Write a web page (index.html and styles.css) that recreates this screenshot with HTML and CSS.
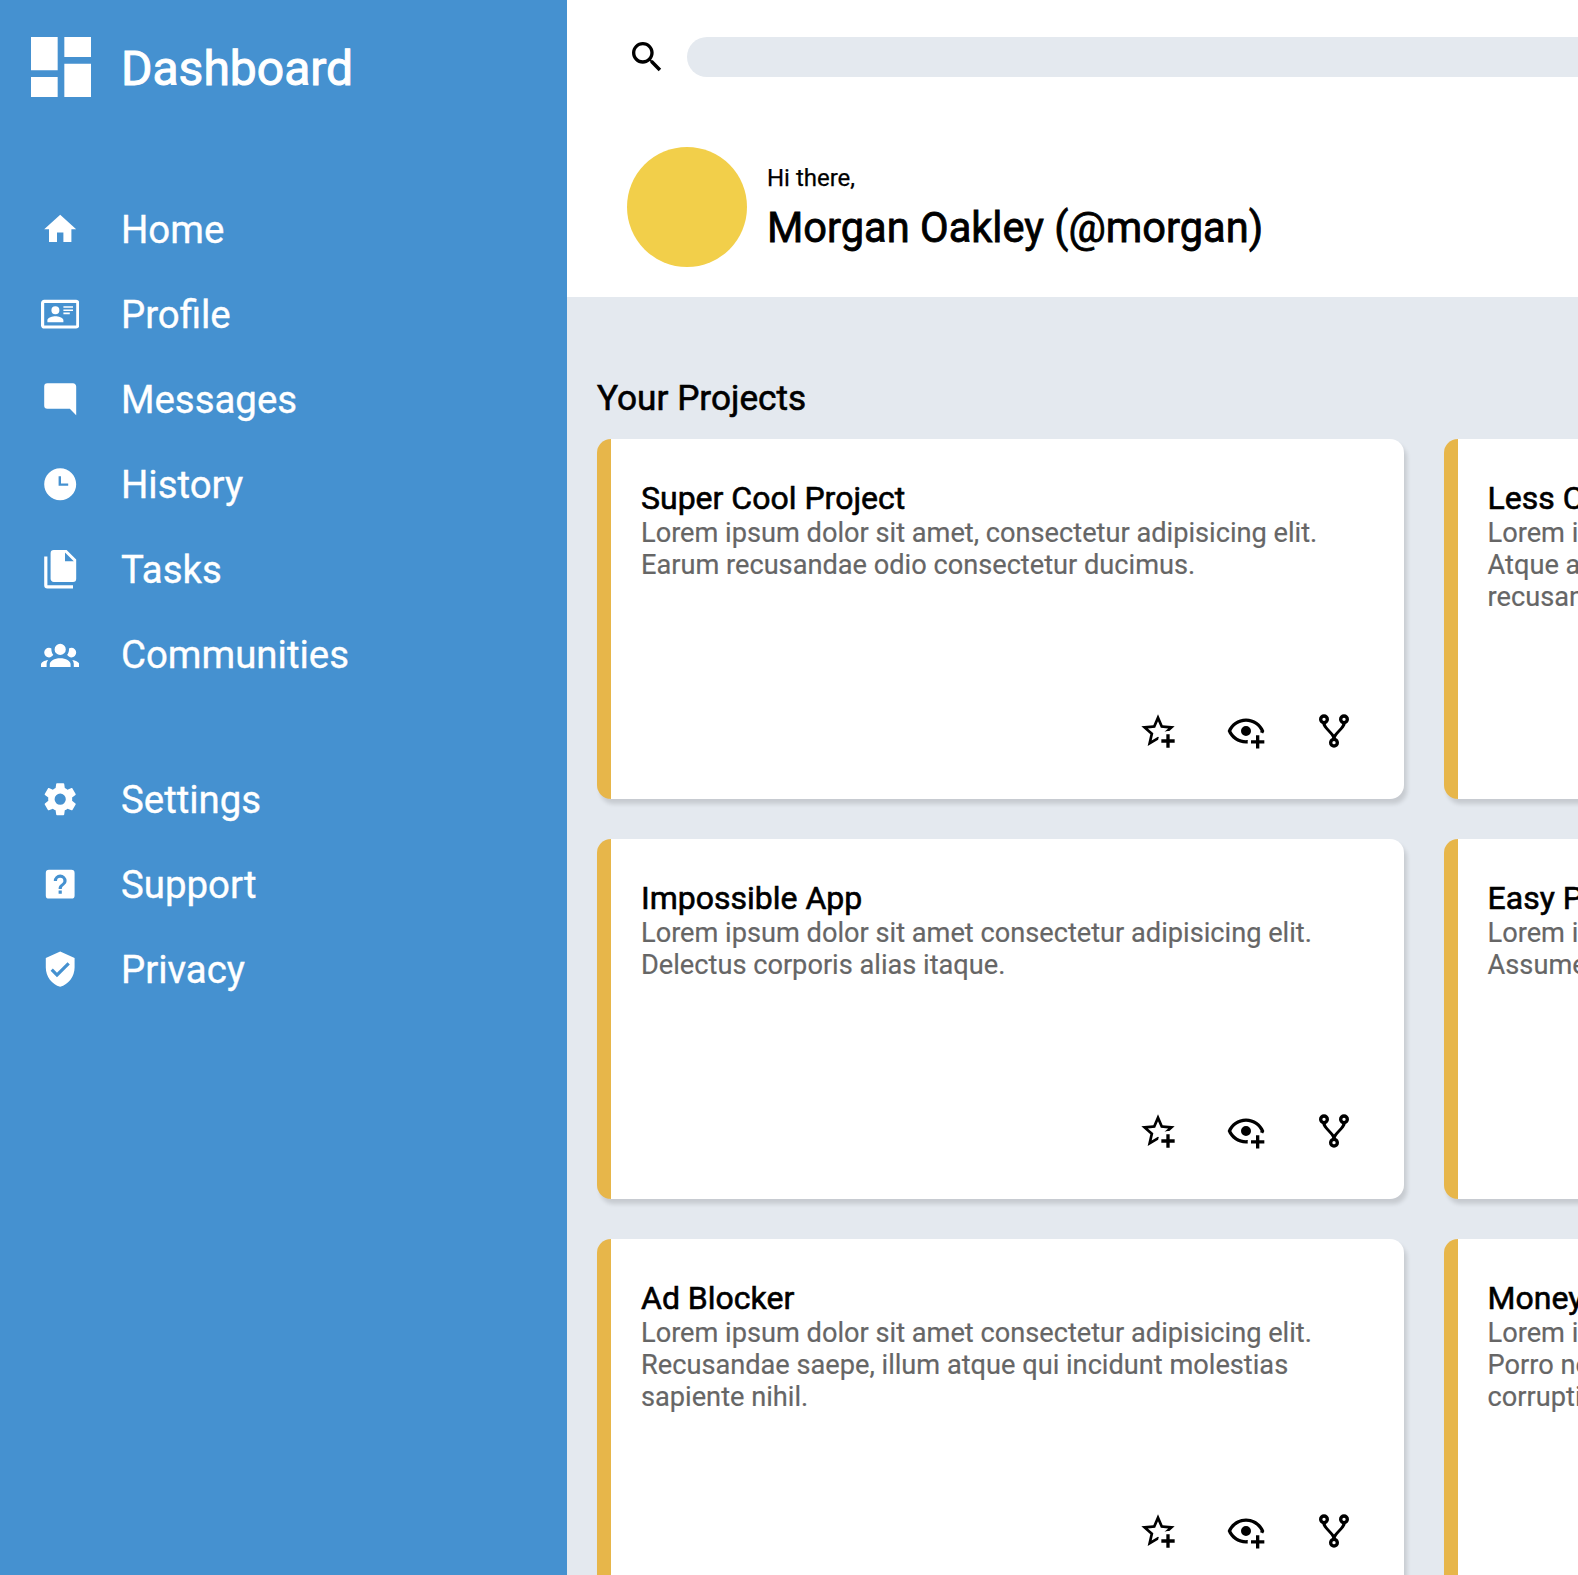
FILE: index.html
```html
<!DOCTYPE html>
<html lang="en">
<head>
<meta charset="utf-8">
<title>Dashboard</title>
<link rel="stylesheet" href="styles.css">
</head>
<body>
<svg class="sprite" aria-hidden="true">
  <symbol id="star" viewBox="0 0 24 24"><path d="M5.8 21 7.4 14 2 9.2 9.2 8.6 12 2 14.8 8.6 22 9.2 18.8 12H18C17.3 12 16.6 12.1 15.9 12.4L18.1 10.5 13.7 10.1 12 6.1 10.3 10.1 5.9 10.5 9.2 13.4 8.2 17.7 12 15.4 12.5 15.7C12.3 16.2 12.1 16.8 12.1 17.3L5.8 21M17 14V17H14V19H17V22H19V19H22V17H19V14H17Z"/></symbol>
  <symbol id="eye" viewBox="0 0 24 24"><path d="M12,4.5C7,4.5 2.73,7.61 1,12C2.73,16.39 7,19.5 12,19.5C12.36,19.5 12.72,19.5 13.08,19.45C13.03,19.13 13,18.82 13,18.5C13,18.14 13.04,17.78 13.1,17.42C12.74,17.46 12.37,17.5 12,17.5C8.24,17.5 4.83,15.36 3.18,12C4.83,8.64 8.24,6.5 12,6.5C15.76,6.5 19.17,8.64 20.82,12C20.7,12.24 20.56,12.45 20.43,12.68C21.09,12.84 21.72,13.11 22.29,13.5C22.56,13 22.8,12.5 23,12C21.27,7.61 17,4.5 12,4.5M12,9A3,3 0 0,0 9,12A3,3 0 0,0 12,15A3,3 0 0,0 15,12A3,3 0 0,0 12,9M18,14.5V17.5H15V19.5H18V22.5H20V19.5H23V17.5H20V14.5H18Z"/></symbol>
  <symbol id="fork" viewBox="0 0 24 24"><path d="M6,2A3,3 0 0,1 9,5C9,6.28 8.19,7.38 7.06,7.81C7.15,8.27 7.39,8.83 8,9.63C9,10.92 11,12.83 12,14.17C13,12.83 15,10.92 16,9.63C16.61,8.83 16.85,8.27 16.94,7.81C15.81,7.38 15,6.28 15,5A3,3 0 0,1 18,2A3,3 0 0,1 21,5C21,6.32 20.14,7.45 18.95,7.85C18.87,8.37 18.64,9 18,9.83C17,11.17 15,13.08 14,14.38C13.39,15.17 13.15,15.73 13.06,16.19C14.19,16.62 15,17.72 15,19A3,3 0 0,1 12,22A3,3 0 0,1 9,19C9,17.72 9.81,16.62 10.94,16.19C10.85,15.73 10.61,15.17 10,14.38C9,13.08 7,11.17 6,9.83C5.36,9 5.13,8.37 5.05,7.85C3.86,7.45 3,6.32 3,5A3,3 0 0,1 6,2M6,4A1,1 0 0,0 5,5A1,1 0 0,0 6,6A1,1 0 0,0 7,5A1,1 0 0,0 6,4M18,4A1,1 0 0,0 17,5A1,1 0 0,0 18,6A1,1 0 0,0 19,5A1,1 0 0,0 18,4M12,18A1,1 0 0,0 11,19A1,1 0 0,0 12,20A1,1 0 0,0 13,19A1,1 0 0,0 12,18Z"/></symbol>
</svg>
<div class="layout">
  <aside class="sidebar">
    <div class="brand">
      <svg viewBox="0 0 24 24"><path d="M13,3V9H21V3M13,21H21V11H13M3,21H11V15H3M3,13H11V3H3V13Z"/></svg>
      <h1>Dashboard</h1>
    </div>
    <nav>
      <ul class="menu">
        <li><svg viewBox="0 0 24 24"><path d="M10,20V14H14V20H19V12H22L12,3L2,12H5V20H10Z"/></svg><span>Home</span></li>
        <li><svg viewBox="0 0 24 24"><path d="M22,3H2C0.91,3.04 0.04,3.91 0,5V19C0.04,20.09 0.91,20.96 2,21H22C23.09,20.96 23.96,20.09 24,19V5C23.96,3.91 23.09,3.04 22,3M22,19H2V5H22V19M14,17V15.75C14,14.09 10.66,13.25 9,13.25C7.34,13.25 4,14.09 4,15.75V17H14M9,7A2.5,2.5 0 0,0 6.5,9.5A2.5,2.5 0 0,0 9,12A2.5,2.5 0 0,0 11.5,9.5A2.5,2.5 0 0,0 9,7M14,7V8H20V7H14M14,9V10H20V9H14M14,11V12H18V11H14"/></svg><span>Profile</span></li>
        <li><svg viewBox="0 0 24 24"><path d="M22,4C22,2.89 21.1,2 20,2H4A2,2 0 0,0 2,4V16A2,2 0 0,0 4,18H18L22,22V4Z"/></svg><span>Messages</span></li>
        <li><svg viewBox="0 0 24 24"><path d="M12 2C6.5 2 2 6.5 2 12C2 17.5 6.5 22 12 22C17.5 22 22 17.5 22 12S17.5 2 12 2M17 13H11V7H12.5V11.5H17V13Z"/></svg><span>History</span></li>
        <li><svg viewBox="0 0 24 24"><path d="M15,7H20.5L15,1.5V7M8,0H16L22,6V18A2,2 0 0,1 20,20H8C6.89,20 6,19.1 6,18V2A2,2 0 0,1 8,0M4,4V22H20V24H4A2,2 0 0,1 2,22V4H4Z"/></svg><span>Tasks</span></li>
        <li><svg viewBox="0 0 24 24"><path d="M12,5.5A3.5,3.5 0 0,1 15.5,9A3.5,3.5 0 0,1 12,12.5A3.5,3.5 0 0,1 8.5,9A3.5,3.5 0 0,1 12,5.5M5,8C5.56,8 6.08,8.15 6.53,8.42C6.38,9.85 6.8,11.27 7.66,12.38C7.16,13.34 6.16,14 5,14A3,3 0 0,1 2,11A3,3 0 0,1 5,8M19,8A3,3 0 0,1 22,11A3,3 0 0,1 19,14C17.84,14 16.84,13.34 16.34,12.38C17.2,11.27 17.62,9.85 17.47,8.42C17.92,8.15 18.44,8 19,8M5.5,18.25C5.5,16.18 8.41,14.5 12,14.5C15.59,14.5 18.5,16.18 18.5,18.25V20H5.5V18.25M0,20V18.5C0,17.11 1.89,15.94 4.45,15.6C3.86,16.28 3.5,17.22 3.5,18.25V20H0M24,20H20.5V18.25C20.5,17.22 20.14,16.28 19.55,15.6C22.11,15.94 24,17.11 24,18.5V20Z"/></svg><span>Communities</span></li>
      </ul>
      <ul class="menu">
        <li><svg viewBox="0 0 24 24"><path d="M12,15.5A3.5,3.5 0 0,1 8.5,12A3.5,3.5 0 0,1 12,8.5A3.5,3.5 0 0,1 15.5,12A3.5,3.5 0 0,1 12,15.5M19.43,12.97C19.47,12.65 19.5,12.33 19.5,12C19.5,11.67 19.47,11.34 19.43,11L21.54,9.37C21.73,9.22 21.78,8.95 21.66,8.73L19.66,5.27C19.54,5.05 19.27,4.96 19.05,5.05L16.56,6.05C16.04,5.66 15.5,5.32 14.87,5.07L14.5,2.42C14.46,2.18 14.25,2 14,2H10C9.75,2 9.54,2.18 9.5,2.42L9.13,5.07C8.5,5.32 7.96,5.66 7.44,6.05L4.95,5.05C4.73,4.96 4.46,5.05 4.34,5.27L2.34,8.73C2.21,8.95 2.27,9.22 2.46,9.37L4.57,11C4.53,11.34 4.5,11.67 4.5,12C4.5,12.33 4.53,12.65 4.57,12.97L2.46,14.63C2.27,14.78 2.21,15.05 2.34,15.27L4.34,18.73C4.46,18.95 4.73,19.03 4.95,18.95L7.44,17.94C7.96,18.34 8.5,18.68 9.13,18.93L9.5,21.58C9.54,21.82 9.75,22 10,22H14C14.25,22 14.46,21.82 14.5,21.58L14.87,18.93C15.5,18.67 16.04,18.34 16.56,17.94L19.05,18.95C19.27,19.03 19.54,18.95 19.66,18.73L21.66,15.27C21.78,15.05 21.73,14.78 21.54,14.63L19.43,12.97Z"/></svg><span>Settings</span></li>
        <li><svg viewBox="0 0 24 24"><path fill-rule="evenodd" d="M5,3H19A2,2 0 0,1 21,5V19A2,2 0 0,1 19,21H5A2,2 0 0,1 3,19V5A2,2 0 0,1 5,3M11,18H13V16H11V18M12,6A4,4 0 0,0 8,10H10A2,2 0 0,1 12,8A2,2 0 0,1 14,10C14,12 11,11.75 11,15H13C13,12.75 16,12.5 16,10A4,4 0 0,0 12,6Z"/></svg><span>Support</span></li>
        <li><svg viewBox="0 0 24 24"><path d="M10,17L6,13L7.41,11.59L10,14.17L16.59,7.58L18,9M12,1L3,5V11C3,16.55 6.84,21.74 12,23C17.16,21.74 21,16.55 21,11V5L12,1Z"/></svg><span>Privacy</span></li>
      </ul>
    </nav>
  </aside>
  <div class="content">
    <header class="header">
      <div class="search">
        <svg viewBox="0 0 24 24"><path d="M9.5,3A6.5,6.5 0 0,1 16,9.5C16,11.11 15.41,12.59 14.44,13.73L14.71,14H15.5L20.5,19L19,20.5L14,15.5V14.71L13.73,14.44C12.59,15.41 11.11,16 9.5,16A6.5,6.5 0 0,1 3,9.5A6.5,6.5 0 0,1 9.5,3M9.5,5C7,5 5,7 5,9.5C5,12 7,14 9.5,14C12,14 14,12 14,9.5C14,7 12,5 9.5,5Z"/></svg>
        <div class="search-field"></div>
      </div>
      <div class="user">
        <div class="avatar"></div>
        <div class="greeting">
          <p class="hello">Hi there,</p>
          <p class="name">Morgan Oakley (@morgan)</p>
        </div>
      </div>
    </header>
    <main class="main">
      <h2>Your Projects</h2>
      <div class="projects">
        <article class="card"><h3>Super Cool Project</h3><p>Lorem ipsum dolor sit amet, consectetur adipisicing elit. Earum recusandae odio consectetur ducimus.</p><div class="actions"><svg><use href="#star"/></svg><svg><use href="#eye"/></svg><svg><use href="#fork"/></svg></div></article>
        <article class="card"><h3>Less Cool Project</h3><p>Lorem ipsum<br>Atque a<br>recusandae</p></article>
        <article class="card"><h3>Impossible App</h3><p>Lorem ipsum dolor sit amet consectetur adipisicing elit. Delectus corporis alias itaque.</p><div class="actions"><svg><use href="#star"/></svg><svg><use href="#eye"/></svg><svg><use href="#fork"/></svg></div></article>
        <article class="card"><h3>Easy Peasy App</h3><p>Lorem ipsum<br>Assumenda</p></article>
        <article class="card"><h3>Ad Blocker</h3><p>Lorem ipsum dolor sit amet consectetur adipisicing elit. Recusandae saepe, illum atque qui incidunt molestias sapiente nihil.</p><div class="actions"><svg><use href="#star"/></svg><svg><use href="#eye"/></svg><svg><use href="#fork"/></svg></div></article>
        <article class="card"><h3>Money Maker</h3><p>Lorem ipsum<br>Porro nemo<br>corrupti</p></article>
      </div>
    </main>
  </div>
</div>
</body>
</html>
```

FILE: styles.css
```css
* { box-sizing: border-box; margin: 0; padding: 0; }
body { font-family: Roboto, "Liberation Sans", sans-serif; color: #000; overflow: hidden; }
svg { flex: none; fill: currentColor; }
.sprite { display: none; }
.layout { display: grid; grid-template-columns: 567px 1fr; height: 1575px; overflow: hidden; }
.sidebar { background: #4591d0; color: #fff; padding: 27px 21px; }
.brand { display: flex; align-items: center; gap: 20px; height: 80px; }
.brand svg { width: 80px; height: 80px; }
.brand h1 { font-size: 48px; font-weight: 400; padding-top: 2px; -webkit-text-stroke: 1px currentColor; }
.menu { list-style: none; display: flex; flex-direction: column; gap: 40px; margin-top: 100px; padding-left: 19.6px; }
.menu + .menu { margin-top: 100px; }
.menu li { display: flex; align-items: center; gap: 42px; height: 45px; font-size: 38.4px; -webkit-text-stroke: 0.35px currentColor; }
.menu svg { width: 38.4px; height: 38.4px; }
.content { min-width: 0; display: flex; flex-direction: column; background: #e4e9ef; overflow: hidden; }
.header { flex: none; height: 297px; background: #fff; padding: 37px 0 30px 60px; display: flex; flex-direction: column; justify-content: space-between; }
.search { display: flex; gap: 20px; }
.search svg { width: 40px; height: 40px; }
.search-field { flex: 1; height: 40px; border-radius: 20px 0 0 20px; background: #e4e9ef; }
.user { display: flex; align-items: center; gap: 20px; }
.avatar { width: 120px; height: 120px; border-radius: 50%; background: #f2cf4a; }
.greeting { padding-top: 1px; }
.hello { font-size: 24px; line-height: 28px; margin-bottom: 11px; -webkit-text-stroke: 0.25px currentColor; }
.name { font-size: 41.6px; line-height: 49px; -webkit-text-stroke: 0.8px currentColor; }
.main { padding: 80px 30px 0; }
.main h2 { font-size: 35.2px; line-height: 42px; font-weight: 400; margin-bottom: 20px; -webkit-text-stroke: 0.6px currentColor; }
.projects { display: grid; grid-template-columns: 806.6px 806.6px; grid-auto-rows: 360px; gap: 40px; }
.card { display: flex; flex-direction: column; background: #fff; border-left: 14px solid #e7b64a; border-radius: 14px; padding: 40px 49.6px 48px 30px; box-shadow: 3px 5px 4px rgba(0, 0, 0, 0.13); }
.card h3 { font-size: 32px; line-height: 38px; font-weight: 400; -webkit-text-stroke: 0.6px currentColor; }
.card p { font-size: 27.2px; line-height: 32px; color: #666; -webkit-text-stroke: 0.2px currentColor; }
.actions { display: flex; justify-content: flex-end; gap: 48px; margin-top: auto; }
.actions svg { width: 40px; height: 40px; }
```
